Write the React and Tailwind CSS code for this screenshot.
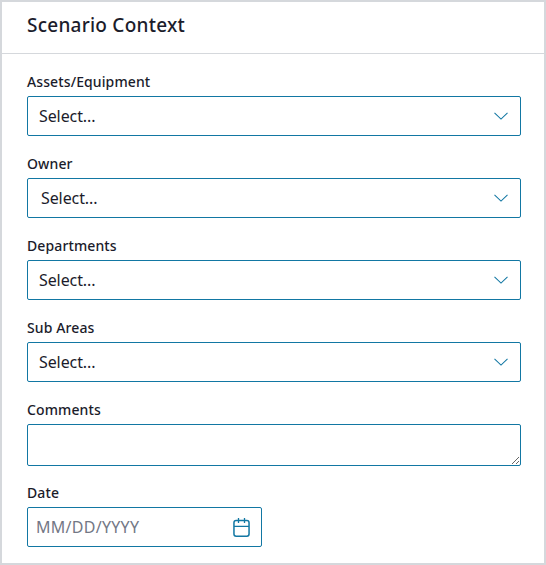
function Chevron() {
  return (
    <svg width="14" height="8" viewBox="0 0 14 8" fill="none" stroke="#1277a3" strokeWidth="1.05">
      <path d="M0.5 0.9 L7 7.1 L13.5 0.9" />
    </svg>
  );
}

function Label({ children }) {
  return <label className="block h-6 text-sm leading-5 font-medium tracking-[0.11px]">{children}</label>;
}

function SelectField({ label, indent = "pl-[11px]" }) {
  return (
    <div className="mb-[18px]">
      <Label>{label}</Label>
      <button
        type="button"
        className={`flex h-10 w-full items-center justify-between rounded-[2px] border border-[#1277a3] pr-3 text-base leading-6 ${indent}`}
      >
        <span className="tracking-[-0.1px]">Select...</span>
        <Chevron />
      </button>
    </div>
  );
}

function CalendarIcon() {
  return (
    <svg width="17" height="20" viewBox="0 0 17 20" fill="none" stroke="#1277a3" strokeWidth="1.5">
      <rect x="0.95" y="3.5" width="15.1" height="15.7" rx="2.2" />
      <path d="M1 9.3H16M5.5 1V6M11.5 1V6" strokeWidth="1.3" />
    </svg>
  );
}

export default function App() {
  return (
    <main className="h-[565px] w-[546px] overflow-hidden border-2 border-[#d5d8dc] bg-white font-['Noto_Sans',sans-serif] text-[#1b1c2b]">
      <header className="flex h-[52px] items-center border-b border-[#d5d8dc] pb-[5px] pl-[25px]">
        <h1 className="text-[19px] leading-6 font-medium tracking-[0.24px]">Scenario Context</h1>
      </header>
      <form className="pt-[18px] pr-[23px] pl-[25px]">
        <SelectField label="Assets/Equipment" />
        <SelectField label="Owner" indent="pl-[13px]" />
        <SelectField label="Departments" />
        <SelectField label="Sub Areas" />
        <Label>Comments</Label>
        <textarea
          aria-label="Comments"
          className="block h-[42px] w-full resize rounded-[2px] border border-[#1277a3]"
        />
        <div className="mt-[17px]">
          <Label>Date</Label>
          <div className="flex h-10 w-[235px] items-center rounded-[2px] border border-[#1277a3] pr-[11px] pl-2">
            <input
              aria-label="Date"
              placeholder="MM/DD/YYYY"
              className="w-0 flex-1 text-base leading-6 tracking-[0.27px] placeholder:text-[#737785]"
            />
            <CalendarIcon />
          </div>
        </div>
      </form>
    </main>
  );
}
